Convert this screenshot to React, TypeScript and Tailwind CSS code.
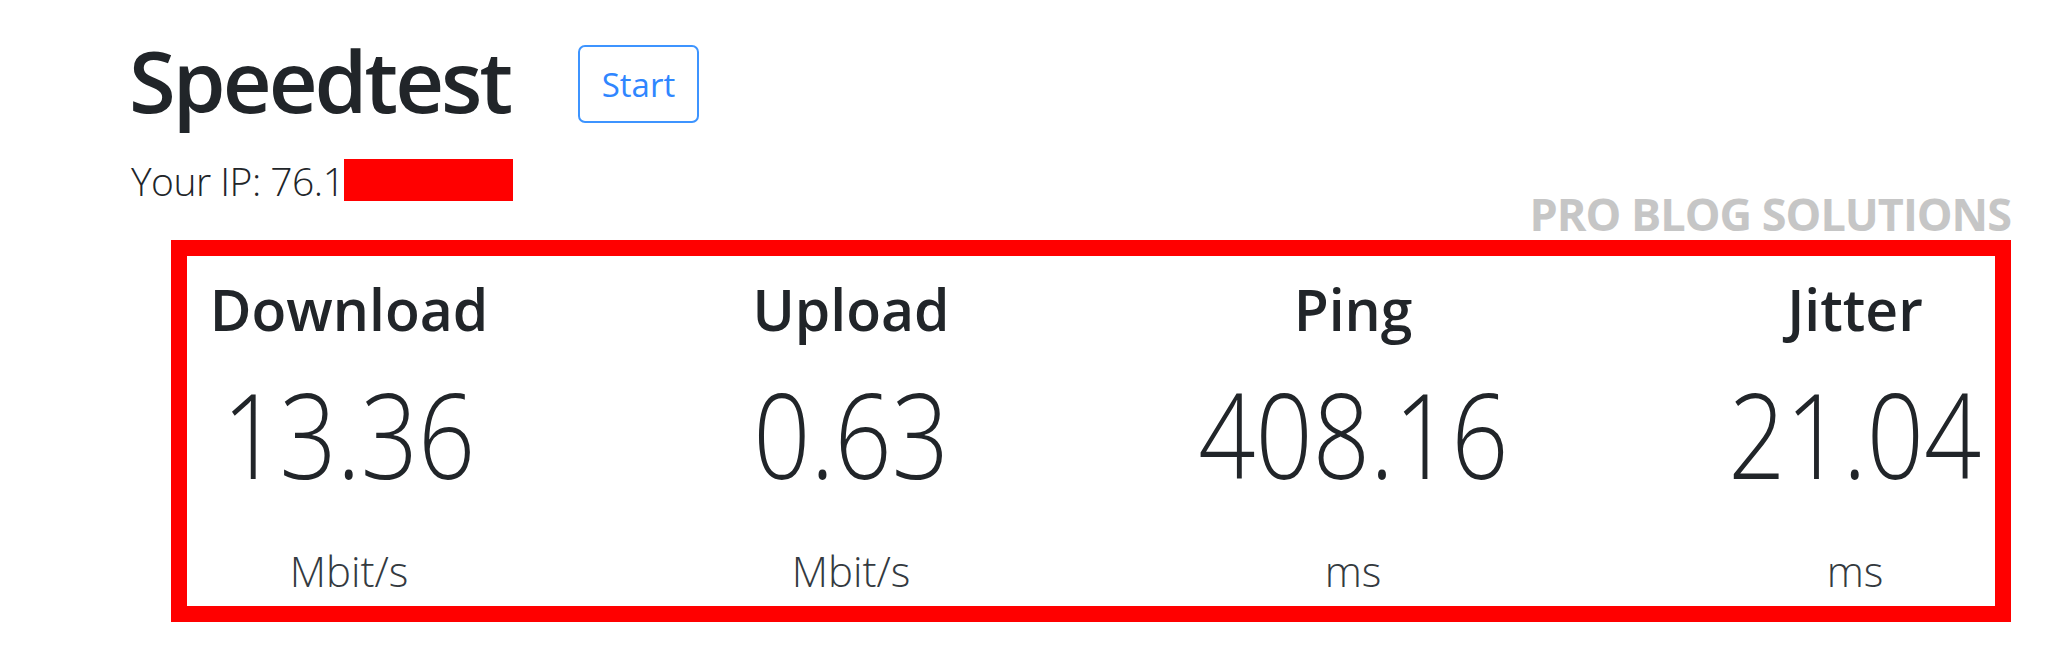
import React from 'react'

const stats = [
  { label: 'Download', value: '13.36', unit: 'Mbit/s' },
  { label: 'Upload', value: '0.63', unit: 'Mbit/s' },
  { label: 'Ping', value: '408.16', unit: 'ms' },
  { label: 'Jitter', value: '21.04', unit: 'ms' },
]

export default function App() {
  return (
    <div className="w-[2048px] h-[649px] overflow-hidden bg-white text-[#212529] font-['Open_Sans','Noto_Sans',sans-serif] pt-[38px]">
      {/* header */}
      <div className="flex items-start pl-[129px]">
        <h1 className="w-[449px] text-[85px] leading-none font-semibold tracking-[-3px]">Speedtest</h1>
        <button className="mt-[7px] w-[121px] h-[78px] rounded-[7px] border-2 border-[#3d94ff] text-[#2f86ff] text-[33px] leading-none">
          Start
        </button>
      </div>

      <div className="flex items-center h-[42px] mt-[36px] pl-[131px]">
        <span className="text-[39px] leading-none font-light tracking-[-0.5px]">Your IP: 76.1</span>
        <span className="w-[169px] h-[42px] bg-[#ff0000]"></span>
      </div>

      <div className="ml-[171px] w-[1840px] -mt-[10px]">
        <div className="text-right text-[45px] leading-none font-bold tracking-[-1px] text-[#c6c6c6]">PRO BLOG SOLUTIONS</div>

        <div className="mt-[4px] h-[382px] border-[16px] border-[#ff0000] pt-[25px] pl-[22px]">
          <div className="grid grid-cols-[repeat(4,280px)] gap-x-[222px]">
            {stats.map(s => (
              <div key={s.label} className="flex flex-col items-center">
                <div className="text-[57px] leading-none font-semibold whitespace-nowrap">{s.label}</div>
                <div className="mt-[37px] text-[118px] leading-none font-light whitespace-nowrap scale-x-[0.85]">{s.value}</div>
                <div className="mt-[57px] text-[42px] leading-none font-light text-[#343a40] whitespace-nowrap">{s.unit}</div>
              </div>
            ))}
          </div>
        </div>
      </div>
    </div>
  )
}
